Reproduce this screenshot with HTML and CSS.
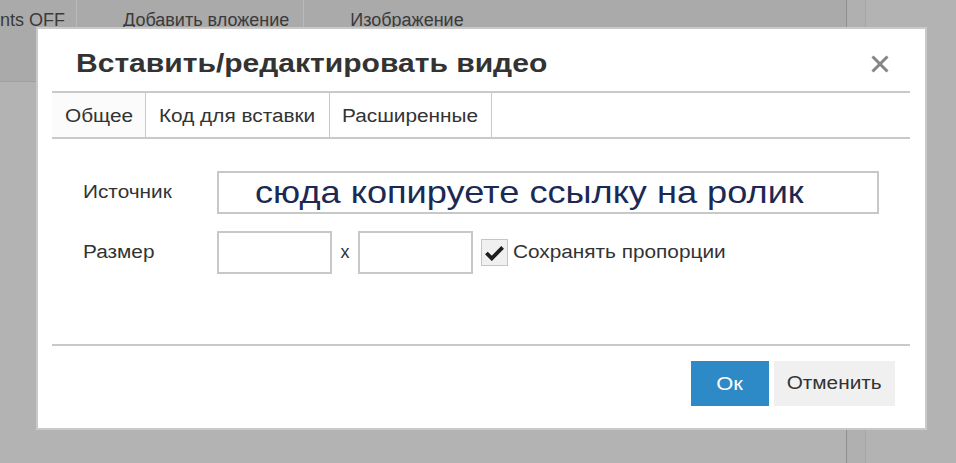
FILE: index.html
```html
<!DOCTYPE html>
<html lang="ru">
<head>
<meta charset="utf-8">
<title>Видео</title>
<link rel="stylesheet" href="styles.css">
</head>
<body>
<div class="page">
  <div class="main">
    <div class="toolbar">
      <div class="tb-btn tb-first">nts OFF</div>
      <div class="tb-btn">Добавить вложение</div>
      <div class="tb-btn tb-last">Изображение</div>
    </div>
  </div>
  <div class="vline dark"></div>
  <div class="strip"></div>
  <div class="vline light"></div>
  <div class="rest"></div>
</div>

<div class="dialog">
  <div class="head">
    <div class="title"><span class="sx">Вставить/редактировать видео</span></div>
    <div class="close">
      <svg width="18" height="18" viewBox="0 0 18 18"><path d="M1.5 1.5 L16.5 16.5 M16.5 1.5 L1.5 16.5" stroke="#858585" stroke-width="3" fill="none"/></svg>
    </div>
  </div>
  <div class="tabs">
    <div class="tab tab-general active"><span class="sx">Общее</span></div>
    <div class="tab tab-embed"><span class="sx">Код для вставки</span></div>
    <div class="tab tab-advanced"><span class="sx">Расширенные</span></div>
  </div>
  <div class="body">
    <div class="row">
      <div class="label"><span class="sx">Источник</span></div>
      <div class="input source"><span class="sx sx-big">сюда копируете ссылку на ролик</span></div>
    </div>
    <div class="row row2">
      <div class="label"><span class="sx">Размер</span></div>
      <div class="input small"></div>
      <div class="times">x</div>
      <div class="input small"></div>
      <div class="check">
        <svg width="19" height="16" viewBox="0 0 19 16"><path d="M1.4 8 L6.8 13.4 L17.6 2.4" stroke="#1e1e1e" stroke-width="3.8" fill="none" stroke-linejoin="miter"/></svg>
      </div>
      <div class="check-label"><span class="sx">Сохранять пропорции</span></div>
    </div>
  </div>
  <div class="foot">
    <div class="btn btn-ok primary"><span class="sx sx-c">Ок</span></div>
    <div class="btn btn-cancel"><span class="sx sx-c">Отменить</span></div>
  </div>
</div>
</body>
</html>
```

FILE: styles.css
```css
html, body {
  margin: 0;
  padding: 0;
}
body {
  width: 956px;
  height: 463px;
  overflow: hidden;
  background: #b3b3b3;
  font-family: "Liberation Sans", Arial, sans-serif;
  position: relative;
}
.page {
  display: flex;
  height: 463px;
}
.main {
  width: 846px;
}
.toolbar {
  height: 81px;
  background: #aaaaaa;
  border-bottom: 1px solid #a0a0a0;
  display: flex;
  align-items: flex-start;
}
.tb-btn {
  height: 40px;
  padding: 10px 14px 0 46px;
  box-sizing: border-box;
  font-size: 18px;
  color: #3a3a3a;
  border-right: 1px solid #bababa;
  white-space: nowrap;
}
.tb-first {
  padding-left: 0;
  width: 77px;
  text-align: right;
  padding-right: 15px;
}
.tb-last {
  border-right: none;
}
.vline {
  width: 1px;
}
.vline.dark { background: #8e8e8e; }
.vline.light { background: #a6a6a6; }
.strip {
  width: 18px;
  background: #b0b0b0;
}
.rest {
  flex: 1;
}

/* horizontally widened text, as in the reference rendering */
.sx {
  display: inline-block;
  white-space: nowrap;
  transform: scaleX(1.155);
  transform-origin: 0 50%;
}
.sx-big {
  transform: scaleX(1.13);
}
.sx-c {
  transform-origin: 50% 50%;
}

.dialog {
  position: absolute;
  left: 36px;
  top: 27px;
  width: 891px;
  height: 403px;
  box-sizing: border-box;
  border: 2px solid #c9c9c9;
  background: #fff;
  padding: 0 15px 0 14px;
  display: flex;
  flex-direction: column;
  color: #333;
}
.head {
  height: 62px;
  border-bottom: 2px solid #c9c9c9;
  display: flex;
  align-items: center;
  justify-content: space-between;
  padding: 0 21px 0 24px;
  flex-shrink: 0;
}
.title {
  font-size: 26px;
  font-weight: bold;
  color: #333;
  padding-top: 7px;
}
.close {
  display: flex;
  padding-top: 7px;
}
.tabs {
  height: 44px;
  border-bottom: 2px solid #c9c9c9;
  display: flex;
  flex-shrink: 0;
}
.tab {
  box-sizing: border-box;
  padding: 3px 0 0 13px;
  border-right: 1px solid #c9c9c9;
  font-size: 18px;
  display: flex;
  align-items: center;
  color: #333;
}
.tab-general { width: 94px; background: #fbfbfb; }
.tab-embed { width: 184px; }
.tab-advanced { width: 162px; padding-left: 12px; }

.body {
  height: 207px;
  border-bottom: 2px solid #c9c9c9;
  padding: 32px 31px 0 31px;
  box-sizing: border-box;
  flex-shrink: 0;
}
.row {
  display: flex;
  align-items: center;
}
.row2 {
  margin-top: 17px;
}
.label {
  width: 134px;
  font-size: 18px;
  color: #333;
  flex-shrink: 0;
}
.input {
  height: 43px;
  box-sizing: border-box;
  border: 2px solid #c8c8c8;
  background: #fff;
}
.source {
  flex: 1;
  font-size: 32px;
  color: #1b2a55;
  padding-left: 36px;
  display: flex;
  align-items: center;
  white-space: nowrap;
}
.small {
  width: 115px;
}
.times {
  width: 26px;
  text-align: center;
  font-size: 18px;
  color: #333;
}
.check {
  width: 27px;
  height: 27px;
  box-sizing: border-box;
  margin-left: 8px;
  border: 1px solid #c5c5c5;
  background: #f0f0f0;
  display: flex;
  align-items: center;
  justify-content: center;
}
.check-label {
  margin-left: 5px;
  font-size: 18px;
  color: #333;
}
.foot {
  display: flex;
  justify-content: flex-end;
  gap: 5px;
  padding: 15px 15px 0 0;
}
.btn {
  height: 45px;
  box-sizing: border-box;
  display: flex;
  align-items: center;
  justify-content: center;
  font-size: 18px;
  background: #f0f0f0;
  color: #333;
}
.btn-ok {
  width: 78px;
  font-size: 19px;
}
.btn-cancel {
  width: 121px;
}
.btn.primary {
  background: #2d8ac7;
  color: #fff;
}
```
